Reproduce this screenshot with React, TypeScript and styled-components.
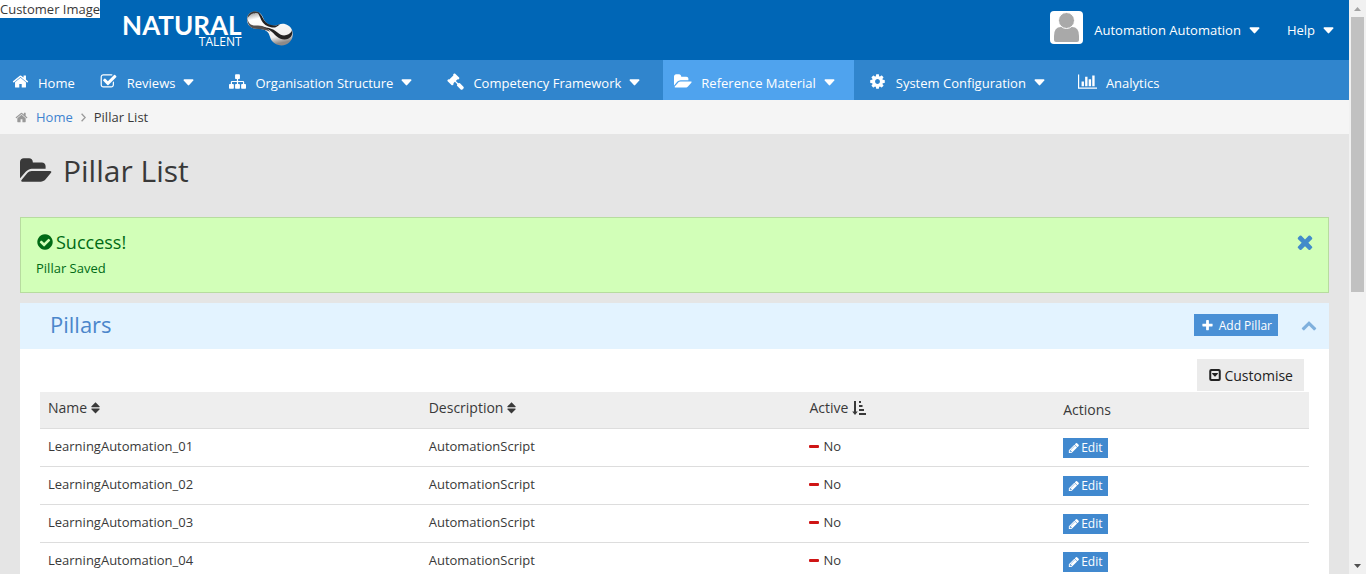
import React from 'react';
import styled, { createGlobalStyle } from 'styled-components';

const GlobalStyle = createGlobalStyle`
  * { box-sizing: border-box; }
  body {
    margin: 0;
    background: #e5e5e5;
    color: #393939;
    font-family: "Open Sans", "Noto Sans", sans-serif;
    font-size: 13px;
    line-height: 18px;
  }
  a { color: inherit; text-decoration: none; }
  button { font-family: inherit; border: 0; cursor: pointer; }
`;

type Glyph = { d: string; w?: number };

const glyphs: Record<string, Glyph> = {
  home: { d: 'M1472 992v480q0 26-19 45t-45 19h-384v-384h-256v384h-384q-26 0-45-19t-19-45v-480q0-1 .5-3t.5-3l575-474 575 474q1 2 1 6zm223-69l-62 74q-8 9-21 11h-3q-13 0-21-7l-692-577-692 577q-12 8-24 7-13-2-21-11l-62-74q-8-10-7-23.5t11-21.5l719-599q32-26 76-26t76 26l244 204v-195q0-14 9-23t23-9h192q14 0 23 9t9 23v408l219 182q10 8 11 21.5t-7 23.5z' },
  check: { d: 'M1472 930v318q0 119-84.5 203.5t-203.5 84.5h-832q-119 0-203.5-84.5t-84.5-203.5v-832q0-119 84.5-203.5t203.5-84.5h832q63 0 117 25 15 7 18 23 3 17-9 29l-49 49q-10 10-23 10-3 0-9-2-23-6-45-6h-832q-66 0-113 47t-47 113v832q0 66 47 113t113 47h832q66 0 113-47t47-113v-254q0-13 9-22l64-64q10-10 23-10 6 0 12 3 20 8 20 29zm231-489l-814 814q-24 24-57 24t-57-24l-430-430q-24-24-24-57t24-57l110-110q24-24 57-24t57 24l263 263 647-647q24-24 57-24t57 24l110 110q24 24 24 57t-24 57z' },
  sitemap: { d: 'M1792 1248v320q0 40-28 68t-68 28h-320q-40 0-68-28t-28-68v-320q0-40 28-68t68-28h96v-192h-512v192h96q40 0 68 28t28 68v320q0 40-28 68t-68 28h-320q-40 0-68-28t-28-68v-320q0-40 28-68t68-28h96v-192h-512v192h96q40 0 68 28t28 68v320q0 40-28 68t-68 28h-320q-40 0-68-28t-28-68v-320q0-40 28-68t68-28h96v-192q0-52 38-90t90-38h512v-192h-96q-40 0-68-28t-28-68v-320q0-40 28-68t68-28h320q40 0 68 28t28 68v320q0 40-28 68t-68 28h-96v192h512q52 0 90 38t38 90v192h96q40 0 68 28t28 68z' },
  gavel: { d: 'M1771 1536q0 53-37 90l-107 108q-39 37-91 37-53 0-90-37l-363-364q-38-36-38-90 0-53 43-96l-256-256-126 126q-14 14-34 14t-34-14q2 2 12.5 12t12.5 13 10 11.5 10 13.5 6 13.5 5.5 16.5 1.5 18q0 38-28 68-3 3-16.5 18t-19 20.5-18.5 16.5-22 15.5-22 9-26 4.5q-40 0-68-28l-408-408q-28-28-28-68 0-13 4.5-26t9-22 15.5-22 16.5-18.5 20.5-19 18-16.5q30-28 68-28 10 0 18 1.5t16.5 5.5 13.5 6 13.5 10 11.5 10 13 12.5 12 12.5q-14-14-14-34t14-34l348-348q14-14 34-14t34 14q-2-2-12.5-12t-12.5-13-10-11.5-10-13.5-6-13.5-5.5-16.5-1.5-18q0-38 28-68 3-3 16.5-18t19-20.5 18.5-16.5 22-15.5 22-9 26-4.5q40 0 68 28l408 408q28 28 28 68 0 13-4.5 26t-9 22-15.5 22-16.5 18.5-20.5 19-18 16.5q-30 28-68 28-10 0-18-1.5t-16.5-5.5-13.5-6-13.5-10-11.5-10-13-12.5-12-12.5q14 14 14 34t-14 34l-126 126 256 256q43-43 96-43 52 0 91 37l363 363q37 39 37 91z' },
  folder: { w: 1920, d: 'M1879 952q0 31-31 66l-336 396q-43 51-120.5 86.5t-143.5 35.5h-1088q-34 0-60.5-13t-26.5-43q0-31 31-66l336-396q43-51 120.5-86.5t143.5-35.5h1088q34 0 60.5 13t26.5 43zm-343-344v160h-832q-94 0-197 47.5t-164 119.5l-337 396-5 6q0-4-.5-12.5t-.5-12.5v-960q0-92 66-158t158-66h320q92 0 158 66t66 158v32h544q92 0 158 66t66 158z' },
  cog: { d: 'M1152 896q0-106-75-181t-181-75-181 75-75 181 75 181 181 75 181-75 75-181zm512-109v222q0 12-8 23t-20 13l-185 28q-19 54-39 91 35 50 107 138 10 12 10 25t-9 23q-27 37-99 108t-94 71q-12 0-26-9l-138-108q-44 23-91 38-16 136-29 186-7 28-36 28h-222q-14 0-24.5-8.5t-11.5-21.5l-28-184q-49-16-90-37l-141 107q-10 9-25 9-14 0-25-11-126-114-165-168-7-10-7-23 0-12 8-23 15-21 51-66.5t54-70.5q-27-50-41-99l-183-27q-13-2-21-12.5t-8-23.5v-222q0-12 8-23t19-13l186-28q14-46 39-92-40-57-107-138-10-12-10-24 0-10 9-23 26-36 98.5-107.5t94.5-71.5q13 0 26 10l138 107q44-23 91-38 16-136 29-186 7-28 36-28h222q14 0 24.5 8.5t11.5 21.5l28 184q49 16 90 37l142-107q9-9 24-9 13 0 25 10 129 119 165 170 7 8 7 22 0 12-8 23-15 21-51 66.5t-54 70.5q26 50 41 98l183 28q13 2 21 12.5t8 23.5z' },
  chart: { w: 2048, d: 'M640 896v512h-256v-512h256zm384-512v1024h-256v-1024h256zm1024 1152v128h-2048v-1536h128v1408h1920zm-640-896v768h-256v-768h256zm384-384v1152h-256v-1152h256z' },
  success: { d: 'M1412 734q0-28-18-46l-91-90q-19-19-45-19t-45 19l-408 407-226-226q-19-19-45-19t-45 19l-91 90q-18 18-18 46 0 27 18 45l362 362q19 19 45 19 27 0 46-19l543-543q18-18 18-45zm252 162q0 209-103 385.5t-279.5 279.5-385.5 103-385.5-103-279.5-279.5-103-385.5 103-385.5 279.5-279.5 385.5-103 385.5 103 279.5 279.5 103 385.5z' },
  times: { d: 'M1490 1322q0 40-28 68l-136 136q-28 28-68 28t-68-28l-294-294-294 294q-28 28-68 28t-68-28l-136-136q-28-28-28-68t28-68l294-294-294-294q-28-28-28-68t28-68l136-136q28-28 68-28t68 28l294 294 294-294q28-28 68-28t68 28l136 136q28 28 28 68t-28 68l-294 294 294 294q28 28 28 68z' },
  plus: { d: 'M1600 736v192q0 40-28 68t-68 28h-416v416q0 40-28 68t-68 28h-192q-40 0-68-28t-28-68v-416h-416q-40 0-68-28t-28-68v-192q0-40 28-68t68-28h416v-416q0-40 28-68t68-28h192q40 0 68 28t28 68v416h416q40 0 68 28t28 68z' },
  chevronUp: { d: 'M1683 1331l-166 165q-19 19-45 19t-45-19l-531-531-531 531q-19 19-45 19t-45-19l-166-165q-19-19-19-45.5t19-45.5l742-741q19-19 45-19t45 19l742 741q19 19 19 45.5t-19 45.5z' },
  pencil: { w: 1664, d: 'M491 1536l91-91-235-235-91 91v107h128v128h107zm523-928q0-22-22-22-10 0-17 7l-542 542q-7 7-7 17 0 22 22 22 10 0 17-7l542-542q7-7 7-17zm-54-192l416 416-832 832h-416v-416zm683 96q0 53-37 90l-166 166-416-416 166-165q36-38 90-38 53 0 91 38l235 234q37 39 37 91z' },
  customise: { d: 'M1280 704q0 22-14 38l-326 360q-18 20-44 20t-44-20l-326-360q-14-16-14-38 0-64 64-64h640q64 0 64 64zM480 384q-64 0-64 64v896q0 64 64 64h832q64 0 64-64v-896q0-64-64-64zm-64-256h960q256 0 256 256v1024q0 256-256 256h-960q-256 0-256-256v-1024q0-256 256-256z' },
};

const Svg = styled.svg`
  display: block;
  flex: none;
  fill: currentColor;
`;

function Icon({ name, size }: { name: string; size: number }) {
  const { d, w = 1792 } = glyphs[name];
  return (
    <Svg height={size} width={Math.round((w / 1792) * size)} viewBox={`0 0 ${w} 1792`} aria-hidden="true">
      <path fillRule="evenodd" d={d} />
    </Svg>
  );
}

const Caret = () => (
  <Svg width="11" height="7" viewBox="0 0 11 7" aria-hidden="true">
    <path d="M1.2 0.3h8.6q1 .3.5 1.2l-4.1 4.6q-.7.6-1.4 0L.7 1.5Q.2.6 1.2.3z" />
  </Svg>
);

const SortBoth = () => (
  <Svg width="9" height="12" viewBox="0 0 9 12" aria-hidden="true">
    <path d="M4.5.3 8.7 4.6q.1.6-.5.6H.8q-.6 0-.5-.6zM4.5 11.5 8.7 7.2q.1-.6-.5-.6H.8q-.6 0-.5.6z" />
  </Svg>
);

const SortAscending = () => (
  <Svg width="14" height="14" viewBox="0 0 14 14" aria-hidden="true">
    <path d="M2 0h2v10.5h1.8L3 14 .2 10.5H2zM7 0h2v2H7zM7 4h3.5v2H7zM7 8h5v2H7zM7 12h7v2H7z" />
  </Svg>
);

const Minus = () => (
  <Svg width="10" height="3" viewBox="0 0 10 3" aria-hidden="true">
    <rect width="10" height="3" rx="1" />
  </Svg>
);

const AngleRight = () => (
  <Svg width="5" height="9" viewBox="0 0 5 9" aria-hidden="true">
    <path d="M.6 .8 4.2 4.5.6 8.2" fill="none" stroke="currentColor" strokeWidth="1.3" />
  </Svg>
);

const Shell = styled.div`
  display: flex;
  height: 100vh;
  overflow: hidden;
`;

const Page = styled.div`
  flex: 1;
  min-width: 0;
`;

const TopBar = styled.header`
  display: flex;
  justify-content: space-between;
  height: 60px;
  padding-right: 15px;
  background: #0066b6;
  color: #fff;
`;

const Brand = styled.div`
  display: flex;
  align-items: flex-start;
  gap: 22px;
`;

const CustomerImage = styled.span`
  background: #fff;
  color: #393939;
`;

const Logo = styled.a`
  display: flex;
  align-items: flex-start;
  gap: 4px;
  padding-top: 10px;
`;

const LogoWords = styled.span`
  display: flex;
  flex-direction: column;
  align-items: flex-end;
  padding-top: 3px;
`;

const LogoName = styled.span`
  font-family: Lato, sans-serif;
  font-size: 26px;
  font-weight: 700;
  line-height: 24px;
`;

const LogoTag = styled.span`
  font-size: 12px;
  line-height: 10px;
`;

const Account = styled.div`
  display: flex;
  align-items: center;
  gap: 27px;
`;

const MenuButton = styled.button`
  display: flex;
  align-items: center;
  gap: 8px;
  padding: 0;
  background: none;
  color: inherit;
  font-size: 13px;
  line-height: 18px;
`;

const AvatarSvg = styled.svg`
  display: block;
  margin: 0 3px 5px 0;
`;

const Nav = styled.nav`
  display: flex;
  gap: 4px;
  height: 40px;
  background: #3085cd;
  color: #fff;
`;

const NavItem = styled.a<{ $active?: boolean; $menu?: boolean }>`
  display: flex;
  align-items: center;
  gap: 8px;
  padding: 5px ${p => (p.$menu ? 19 : 10)}px 0 10px;
  background: ${p => (p.$active ? '#4fa3ee' : 'transparent')};
  white-space: nowrap;
`;

const NavIcon = styled.span`
  display: flex;
  justify-content: center;
  width: 20px;
  padding-bottom: 2px;
`;

const Breadcrumb = styled.nav`
  display: flex;
  align-items: center;
  gap: 8px;
  height: 34px;
  padding: 0 15px;
  background: #f5f5f5;
  svg { color: #999; }
  a { color: #3d83d0; }
`;

const Content = styled.main`
  padding: 0 20px;
`;

const Title = styled.h1`
  display: flex;
  align-items: center;
  gap: 11px;
  margin: 0;
  padding: 18px 0 27px;
  font-size: 30px;
  font-weight: 400;
  line-height: 38px;
`;

const Alert = styled.section`
  display: flex;
  justify-content: space-between;
  align-items: flex-start;
  margin-bottom: 10px;
  padding: 13px 12px 15px 15px;
  border: 1px solid #b7dc9f;
  background: #d2ffb8;
  color: #006a15;
  p { margin: 0; }
`;

const AlertTitle = styled.h2`
  display: flex;
  align-items: center;
  gap: 2px;
  margin: 0 0 6px;
  font-size: 18px;
  font-weight: 400;
  line-height: 22px;
`;

const IconButton = styled.button<{ $color: string }>`
  padding: 0;
  background: none;
  color: ${p => p.$color};
`;

const Panel = styled.section`
  background: #fff;
`;

const PanelHead = styled.header`
  display: flex;
  align-items: center;
  justify-content: space-between;
  height: 46px;
  padding: 0 12px 2px 30px;
  background: #e3f3ff;
  h2 {
    margin: 0;
    padding-bottom: 2px;
    color: #4b86cb;
    font-size: 22px;
    font-weight: 400;
    line-height: 30px;
  }
`;

const PanelTools = styled.div`
  display: flex;
  align-items: center;
  gap: 23px;
`;

const AddButton = styled.button`
  display: flex;
  align-items: center;
  gap: 5px;
  height: 22px;
  padding: 0 6px 0 7px;
  background: #4a90d5;
  color: #fff;
  font-size: 12px;
`;

const PanelBody = styled.div`
  display: flex;
  flex-direction: column;
  padding: 10px 20px;
`;

const CustomiseButton = styled.button`
  display: flex;
  align-items: center;
  align-self: flex-end;
  gap: 2px;
  height: 32px;
  margin: 0 5px 1px 0;
  padding: 0 11px;
  background: #ebebeb;
  color: #222;
  font-size: 14px;
`;

const Table = styled.table`
  width: 100%;
  border-spacing: 0;
  table-layout: fixed;
  th, td {
    height: 38px;
    padding: 0 8px;
    border-bottom: 1px solid #ddd;
    text-align: left;
  }
  td { padding-bottom: 3px; }
  td:last-child { padding-bottom: 0; }
  th {
    height: 37px;
    background: #eee;
    font-size: 14px;
    font-weight: 400;
  }
`;

const ColumnHead = styled.th<{ $width: string }>`
  width: ${p => p.$width};
`;

const SortButton = styled.button`
  display: flex;
  align-items: center;
  gap: 4px;
  padding: 0 0 5px;
  background: none;
  color: inherit;
  font-size: 14px;
`;

const Status = styled.span`
  display: flex;
  align-items: center;
  gap: 4px;
  svg { color: #cf1515; }
`;

const EditButton = styled.button`
  display: flex;
  align-items: center;
  gap: 2px;
  height: 20px;
  padding: 0 5px;
  background: #4189cf;
  color: #fff;
  font-size: 12px;
`;

const ScrollTrack = styled.div`
  display: flex;
  flex-direction: column;
  align-items: center;
  width: 17px;
  background: #f1f1f1;
`;

const ScrollArrow = styled.span`
  display: flex;
  align-items: center;
  justify-content: center;
  height: 17px;
`;

const ScrollRange = styled.div`
  flex: 1;
  width: 13px;
`;

const ScrollThumb = styled.div`
  height: 51%;
  background: #c1c1c1;
`;

const menu = [
  { label: 'Home', icon: 'home' },
  { label: 'Reviews', icon: 'check', menu: true },
  { label: 'Organisation Structure', icon: 'sitemap', menu: true },
  { label: 'Competency Framework', icon: 'gavel', menu: true },
  { label: 'Reference Material', icon: 'folder', menu: true, active: true },
  { label: 'System Configuration', icon: 'cog', menu: true },
  { label: 'Analytics', icon: 'chart' },
];

const pillars = ['01', '02', '03', '04'].map(n => ({
  name: `LearningAutomation_${n}`,
  description: 'AutomationScript',
  active: 'No',
}));

const LogoMark = () => (
  <svg width="48" height="37" viewBox="0 0 48 37" aria-hidden="true">
    <defs>
      <linearGradient id="chrome" x1="0.2" y1="0" x2="0.5" y2="1">
        <stop offset="0" stopColor="#9a9a9a" />
        <stop offset="0.2" stopColor="#ffffff" />
        <stop offset="0.8" stopColor="#f1efee" />
        <stop offset="1" stopColor="#8f8a88" />
      </linearGradient>
    </defs>
    <path d="M9 1.500C4 1.500 1 5 1 9.500S4 18 9 18.500c6 .5 9 .5 12 3 3 2.500 2.500 6 5 9.500 3 4 9 5.500 14 3.500 6-2.500 8-9 6-14.500-2-5-8-7.500-13-5.500-5 2-8 1.500-11-.5-4-3-4-5-6-8.500-1.500-2.500-4-4-7-4z" fill="url(#chrome)" />
    <path d="M1.500 7c0 6 3 8.500 8 8.500 7 0 11 1 15 6.500-4-2-7-2.500-15-3.300C3 18 .5 12 1.500 7z" fill="#55504f" />
    <path d="M11 2c3 .5 5 4 7 8 2 3.500 6 5 10 5.500 2 .3 4-.5 6-1.500-3 3-5 4-8 3.500-5-.8-9-3.500-11-8-1.300-3-2-5.500-4-7.500z" fill="#242222" />
    <path d="M46 20c1.500 5-2 9.500-7.500 9.500-6 0-8.500-4-12.500-7.500-3-2.500-6-4-9-4.500 7 0 11 2 14.500 5 3 2.600 6 3.500 9 2.500 3-.9 5-2.500 5.500-5z" fill="#242222" />
    <path d="M1.500 8C2 4 5 1.500 9 1.500c2 0 4 .8 5 2C9 2 4 3.500 1.500 8z" fill="#3c3938" />
  </svg>
);

export default function App() {
  return (
    <>
      <GlobalStyle />
      <Shell>
        <Page>
          <TopBar>
            <Brand>
              <CustomerImage>Customer Image</CustomerImage>
              <Logo href="#">
                <LogoWords>
                  <LogoName>NATURAL</LogoName>
                  <LogoTag>TALENT</LogoTag>
                </LogoWords>
                <LogoMark />
              </Logo>
            </Brand>
            <Account>
              <MenuButton type="button">
                <AvatarSvg width="33" height="33" viewBox="0 0 33 33" aria-hidden="true">
                  <rect width="33" height="33" rx="4" fill="#fff" />
                  <path d="M4 29v-4q0-9 7-9h11q7 0 7 9v4q0 2-2 2H6q-2 0-2-2z" fill="#a9a9a9" />
                  <circle cx="16.500" cy="9.500" r="8" fill="#a9a9a9" stroke="#fff" />
                </AvatarSvg>
                Automation Automation
                <Caret />
              </MenuButton>
              <MenuButton type="button">
                Help
                <Caret />
              </MenuButton>
            </Account>
          </TopBar>
          <Nav aria-label="Main">
            {menu.map(item => (
              <NavItem key={item.label} href="#" $menu={item.menu} $active={item.active}>
                <NavIcon><Icon name={item.icon} size={17} /></NavIcon>
                {item.label}
                {item.menu && <Caret />}
              </NavItem>
            ))}
          </Nav>
          <Breadcrumb aria-label="Breadcrumb">
            <Icon name="home" size={13} />
            <a href="#">Home</a>
            <AngleRight />
            <span>Pillar List</span>
          </Breadcrumb>
          <Content>
            <Title><Icon name="folder" size={30} />Pillar List</Title>
            <Alert role="status">
              <div>
                <AlertTitle><Icon name="success" size={18} />Success!</AlertTitle>
                <p>Pillar Saved</p>
              </div>
              <IconButton type="button" aria-label="Dismiss" $color="#428bca">
                <Icon name="times" size={22} />
              </IconButton>
            </Alert>
            <Panel>
              <PanelHead>
                <h2>Pillars</h2>
                <PanelTools>
                  <AddButton type="button"><Icon name="plus" size={13} />Add Pillar</AddButton>
                  <IconButton type="button" aria-label="Collapse" $color="#7fb0dd">
                    <Icon name="chevronUp" size={16} />
                  </IconButton>
                </PanelTools>
              </PanelHead>
              <PanelBody>
                <CustomiseButton type="button"><Icon name="customise" size={14} />Customise</CustomiseButton>
                <Table>
                  <thead>
                    <tr>
                      <ColumnHead $width="30%"><SortButton type="button">Name<SortBoth /></SortButton></ColumnHead>
                      <ColumnHead $width="30%"><SortButton type="button">Description<SortBoth /></SortButton></ColumnHead>
                      <ColumnHead $width="20%"><SortButton type="button">Active<SortAscending /></SortButton></ColumnHead>
                      <ColumnHead $width="20%">Actions</ColumnHead>
                    </tr>
                  </thead>
                  <tbody>
                    {pillars.map(p => (
                      <tr key={p.name}>
                        <td>{p.name}</td>
                        <td>{p.description}</td>
                        <td><Status><Minus />{p.active}</Status></td>
                        <td><EditButton type="button"><Icon name="pencil" size={12} />Edit</EditButton></td>
                      </tr>
                    ))}
                  </tbody>
                </Table>
              </PanelBody>
            </Panel>
          </Content>
        </Page>
        <ScrollTrack aria-hidden="true">
          <ScrollArrow>
            <svg width="7" height="4" viewBox="0 0 7 4"><path d="M0 4 3.500 0 7 4z" fill="#a3a3a3" /></svg>
          </ScrollArrow>
          <ScrollRange><ScrollThumb /></ScrollRange>
          <ScrollArrow>
            <svg width="7" height="4" viewBox="0 0 7 4"><path d="M0 0 3.500 4 7 0z" fill="#505050" /></svg>
          </ScrollArrow>
        </ScrollTrack>
      </Shell>
    </>
  );
}
